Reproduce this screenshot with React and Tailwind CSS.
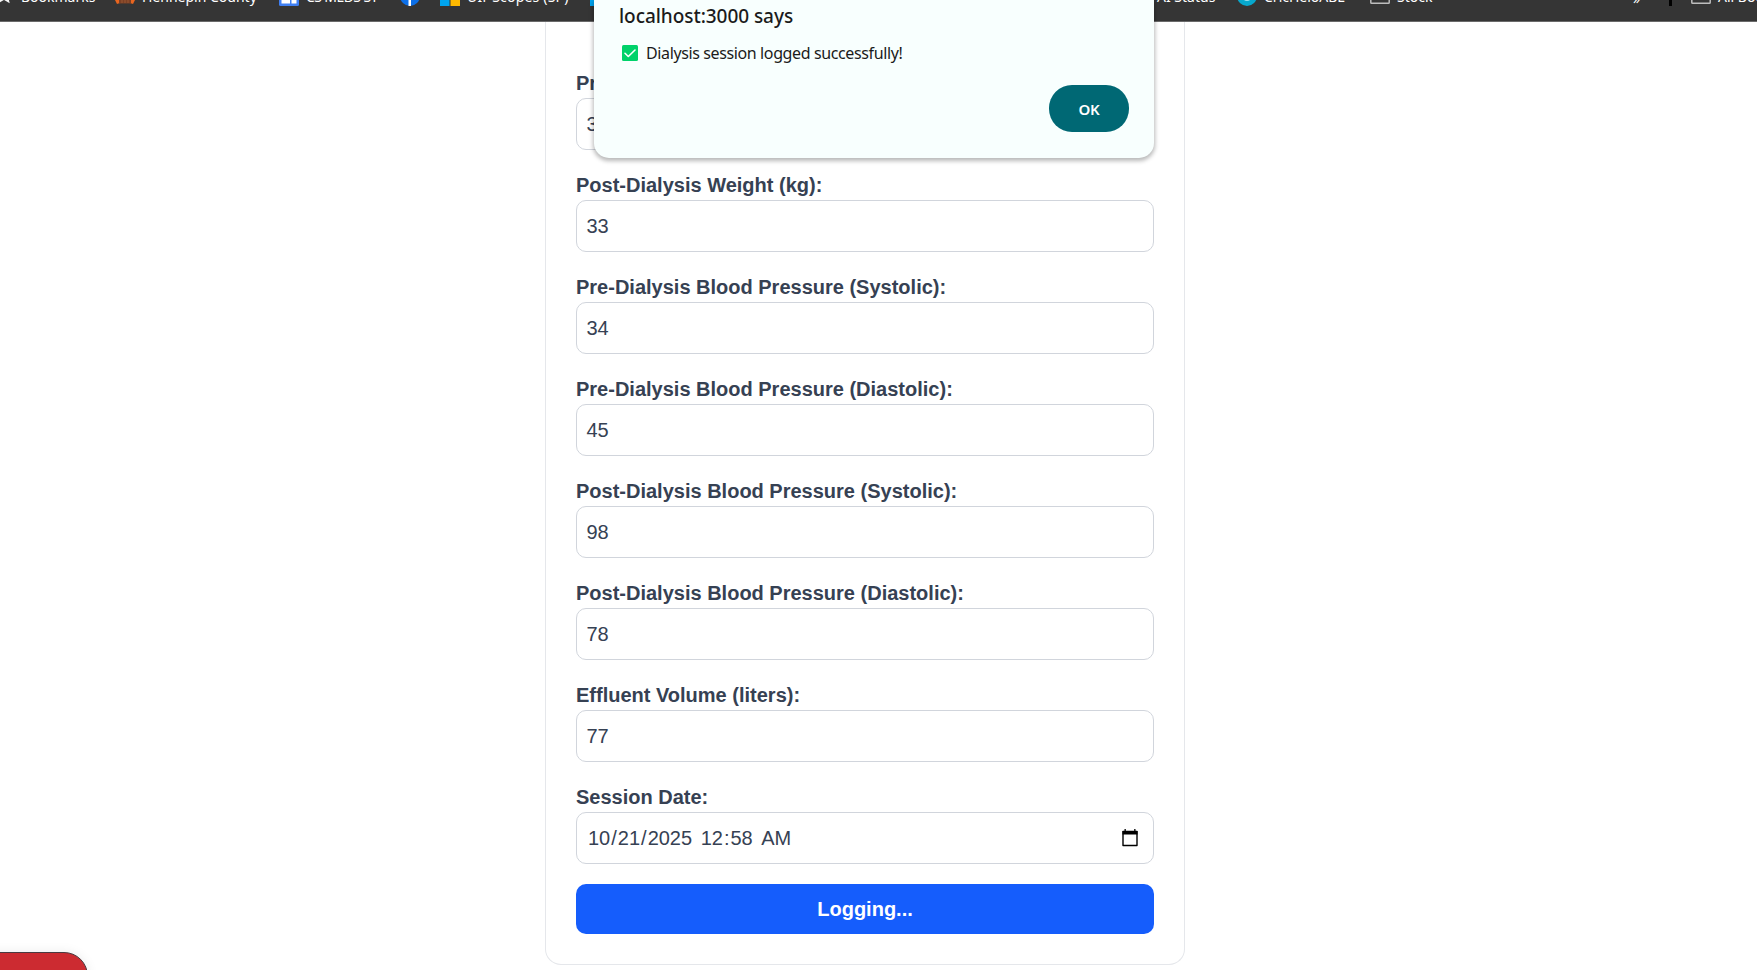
import React from "react";

const fields = [
  ["Pre-Dialysis Weight (kg):", "34"],
  ["Post-Dialysis Weight (kg):", "33"],
  ["Pre-Dialysis Blood Pressure (Systolic):", "34"],
  ["Pre-Dialysis Blood Pressure (Diastolic):", "45"],
  ["Post-Dialysis Blood Pressure (Systolic):", "98"],
  ["Post-Dialysis Blood Pressure (Diastolic):", "78"],
  ["Effluent Volume (liters):", "77"],
];

function Bookmark({ icon, label, className }) {
  return (
    <div className={`flex shrink-0 whitespace-nowrap ${className}`}>
      <span className="mr-[7px] flex h-5 w-5 shrink-0 items-end">{icon}</span>
      <span className="mt-px leading-5">{label}</span>
    </div>
  );
}

const StarIcon = (
  <svg viewBox="0 0 20 20" className="h-5 w-5" fill="#f5f5f5">
    <path d="M10 0l2.700 6 6.300.6-4.800 4.300 1.500 6.300-5.700-3.300-5.700 3.300 1.500-6.300L1 6.600 7.300 6z" />
  </svg>
);
const CountyIcon = (
  <svg viewBox="0 0 20 20" className="h-5 w-5">
    <path d="M0 5h20v9l-2 4-3-1H5l-3 1-2-4z" fill="#e8651f" />
    <path d="M4 6h12v11.500H4z" fill="#7b4025" />
    <path d="M7 6v11M10 6v11M13 6v11" stroke="#9a5632" />
  </svg>
);
const SitesIcon = (
  <svg viewBox="0 0 20 20" className="h-5 w-5">
    <rect width="20" height="20" rx="1.500" fill="#3f7ff2" />
    <path d="M2.500 6H11v11.500H2.500zM12.500 6h5v11.500h-5z" fill="#fff" />
  </svg>
);
const FacebookIcon = (
  <svg viewBox="0 0 20 20" className="h-5 w-5">
    <circle cx="10" cy="10" r="10" fill="#0c6fe8" />
    <path d="M8.500 20v-8H6V9h2.500V7c0-2.500 1.500-4 4-4h1.500v3h-1.500c-1 0-1.500.5-1.500 1.500V9h3l-.5 3H11v8z" fill="#fff" />
  </svg>
);
const MicrosoftIcon = (
  <svg viewBox="0 0 20 20" className="h-5 w-5">
    <path d="M0 0h9.500v9.500H0z" fill="#f25022" />
    <path d="M10.500 0H20v9.500h-9.500z" fill="#7fba00" />
    <path d="M0 10.500h9.500V20H0z" fill="#00a4ef" />
    <path d="M10.500 10.500H20V20h-9.500z" fill="#ffb900" />
  </svg>
);
const CyanIcon = (
  <svg viewBox="0 0 20 20" className="h-5 w-5">
    <circle cx="10" cy="10" r="10" fill="#07a8cd" />
    <circle cx="10" cy="11" r="4" fill="#9be0ee" />
  </svg>
);
const FolderIcon = (
  <svg viewBox="0 0 20 20" className="h-5 w-5" fill="none" stroke="#bdbdbd" strokeWidth="1.500">
    <path d="M.8 0h6l2 2h10.400v14.500q0 .8-.8.8H1.600q-.8 0-.8-.8z" />
  </svg>
);

function BookmarksBar() {
  return (
    <header className="h-[22px] overflow-hidden border-b border-[#6a6a6a] bg-[#353535] font-['Noto_Sans',sans-serif] text-[14px] text-white">
      <div className="-mt-[14px] flex h-6">
        <Bookmark className="-ml-[6px] w-[121px]" icon={StarIcon} label="Bookmarks" />
        <Bookmark className="w-[164px]" icon={CountyIcon} label="Hennepin County" />
        <Bookmark className="w-[121px] tracking-[-0.6px]" icon={SitesIcon} label="CS MEDS ST" />
        <Bookmark className="w-10" icon={FacebookIcon} label="" />
        <Bookmark className="w-[150px] tracking-[0.2px]" icon={MicrosoftIcon} label="UIr Scopes (SP)" />
        <Bookmark className="w-[538px]" icon={<span className="h-5 w-5 bg-[#00a4ef]" />} label="" />
        <div className="mt-px w-[109px] shrink-0 pl-[29px] leading-5">AI Status</div>
        <Bookmark className="w-[133px]" icon={CyanIcon} label="CricHeloABL" />
        <Bookmark className="w-[263px]" icon={FolderIcon} label="Stock" />
        <span className="mt-[3px] w-[36px] shrink-0 leading-5">»</span>
        <span className="mr-[19px] h-5 w-[3px] shrink-0 bg-black" />
        <Bookmark className="" icon={FolderIcon} label="All Bookmarks" />
      </div>
    </header>
  );
}

function DateInput() {
  return (
    <div className="flex h-[52px] items-center justify-between rounded-[10px] border border-[#d1d5dc] pr-[15px] pl-[10px]">
      <div className="flex whitespace-pre">
        <span className="px-px">10</span>/<span className="px-px">21</span>/
        <span className="px-px">2025</span>
        <span className="w-[6.500px]"> </span>
        <span className="px-px">12</span>:<span className="px-px">58</span>
        <span className="w-[6.500px]"> </span>
        <span className="px-px">AM</span>
      </div>
      <svg viewBox="0 0 16 18" className="h-[18px] w-4">
        <path d="M1 2.500h14v14H1z" fill="none" stroke="#000" strokeWidth="1.400" strokeLinejoin="round" />
        <path d="M.5 2h15v3.500H.5zM2.500 0h1.300v3H2.500zM12.200 0h1.300v3h-1.300z" />
      </svg>
    </div>
  );
}

function Alert() {
  return (
    <div
      role="alertdialog"
      className="absolute top-0 left-[594px] h-[158px] w-[560px] rounded-b-[15px] bg-[#f8fffe] font-['Noto_Sans',sans-serif] text-[#1b1b1b] shadow-[0_2px_4px_1px_rgba(0,0,0,0.28)]"
    >
      <div className="flex h-full flex-col px-[25px]">
        <h2 className="mt-1 text-[19px] leading-6 font-medium tracking-[-0.05px]">localhost:3000 says</h2>
        <div className="mt-[13px] flex items-center gap-2 pl-[3px] text-[16px] leading-6">
          <svg viewBox="0 0 16 16" className="h-4 w-4">
            <rect width="16" height="16" rx="1.500" fill="#00d26a" />
            <path d="M3 8.300l3.300 3.200L13 5" fill="none" stroke="#fff" strokeWidth="1.600" strokeLinecap="round" strokeLinejoin="round" />
          </svg>
          <span className="tracking-[-0.38px]">Dialysis session logged successfully!</span>
        </div>
        <button className="mt-5 h-[47px] w-20 self-end rounded-[23px] bg-[#006874] text-[15px] font-semibold tracking-[-0.2px] text-white">
          OK
        </button>
      </div>
    </div>
  );
}

export default function App() {
  return (
    <div className="relative flex h-[970px] w-[1757px] flex-col overflow-hidden bg-white font-['Liberation_Sans',sans-serif] text-[20px] leading-[30px] text-[#364153]">
      <BookmarksBar />
      <main className="ml-[545px] h-[943px] w-[640px] rounded-b-[16px] border-x border-b border-[#e5e7eb] px-[30px] pt-[46px]">
        <form className="flex flex-col gap-5">
          {fields.map(([label, value]) => (
            <div key={label}>
              <label className="block font-bold">{label}</label>
              <div className="flex h-[52px] items-center rounded-[10px] border border-[#d1d5dc] px-[9.500px]">{value}</div>
            </div>
          ))}
          <div>
            <label className="block font-bold">Session Date:</label>
            <DateInput />
          </div>
          <button type="button" className="h-[50px] rounded-[10px] bg-[#155dfc] font-bold text-white">
            Logging...
          </button>
        </form>
      </main>
      <Alert />
      <div className="absolute top-[952px] -left-10 h-16 w-32 rounded-[24px] border border-[#4a3a40] bg-[#cc2b31] shadow-[0_0_12px_rgba(0,0,0,0.08)]" />
    </div>
  );
}
